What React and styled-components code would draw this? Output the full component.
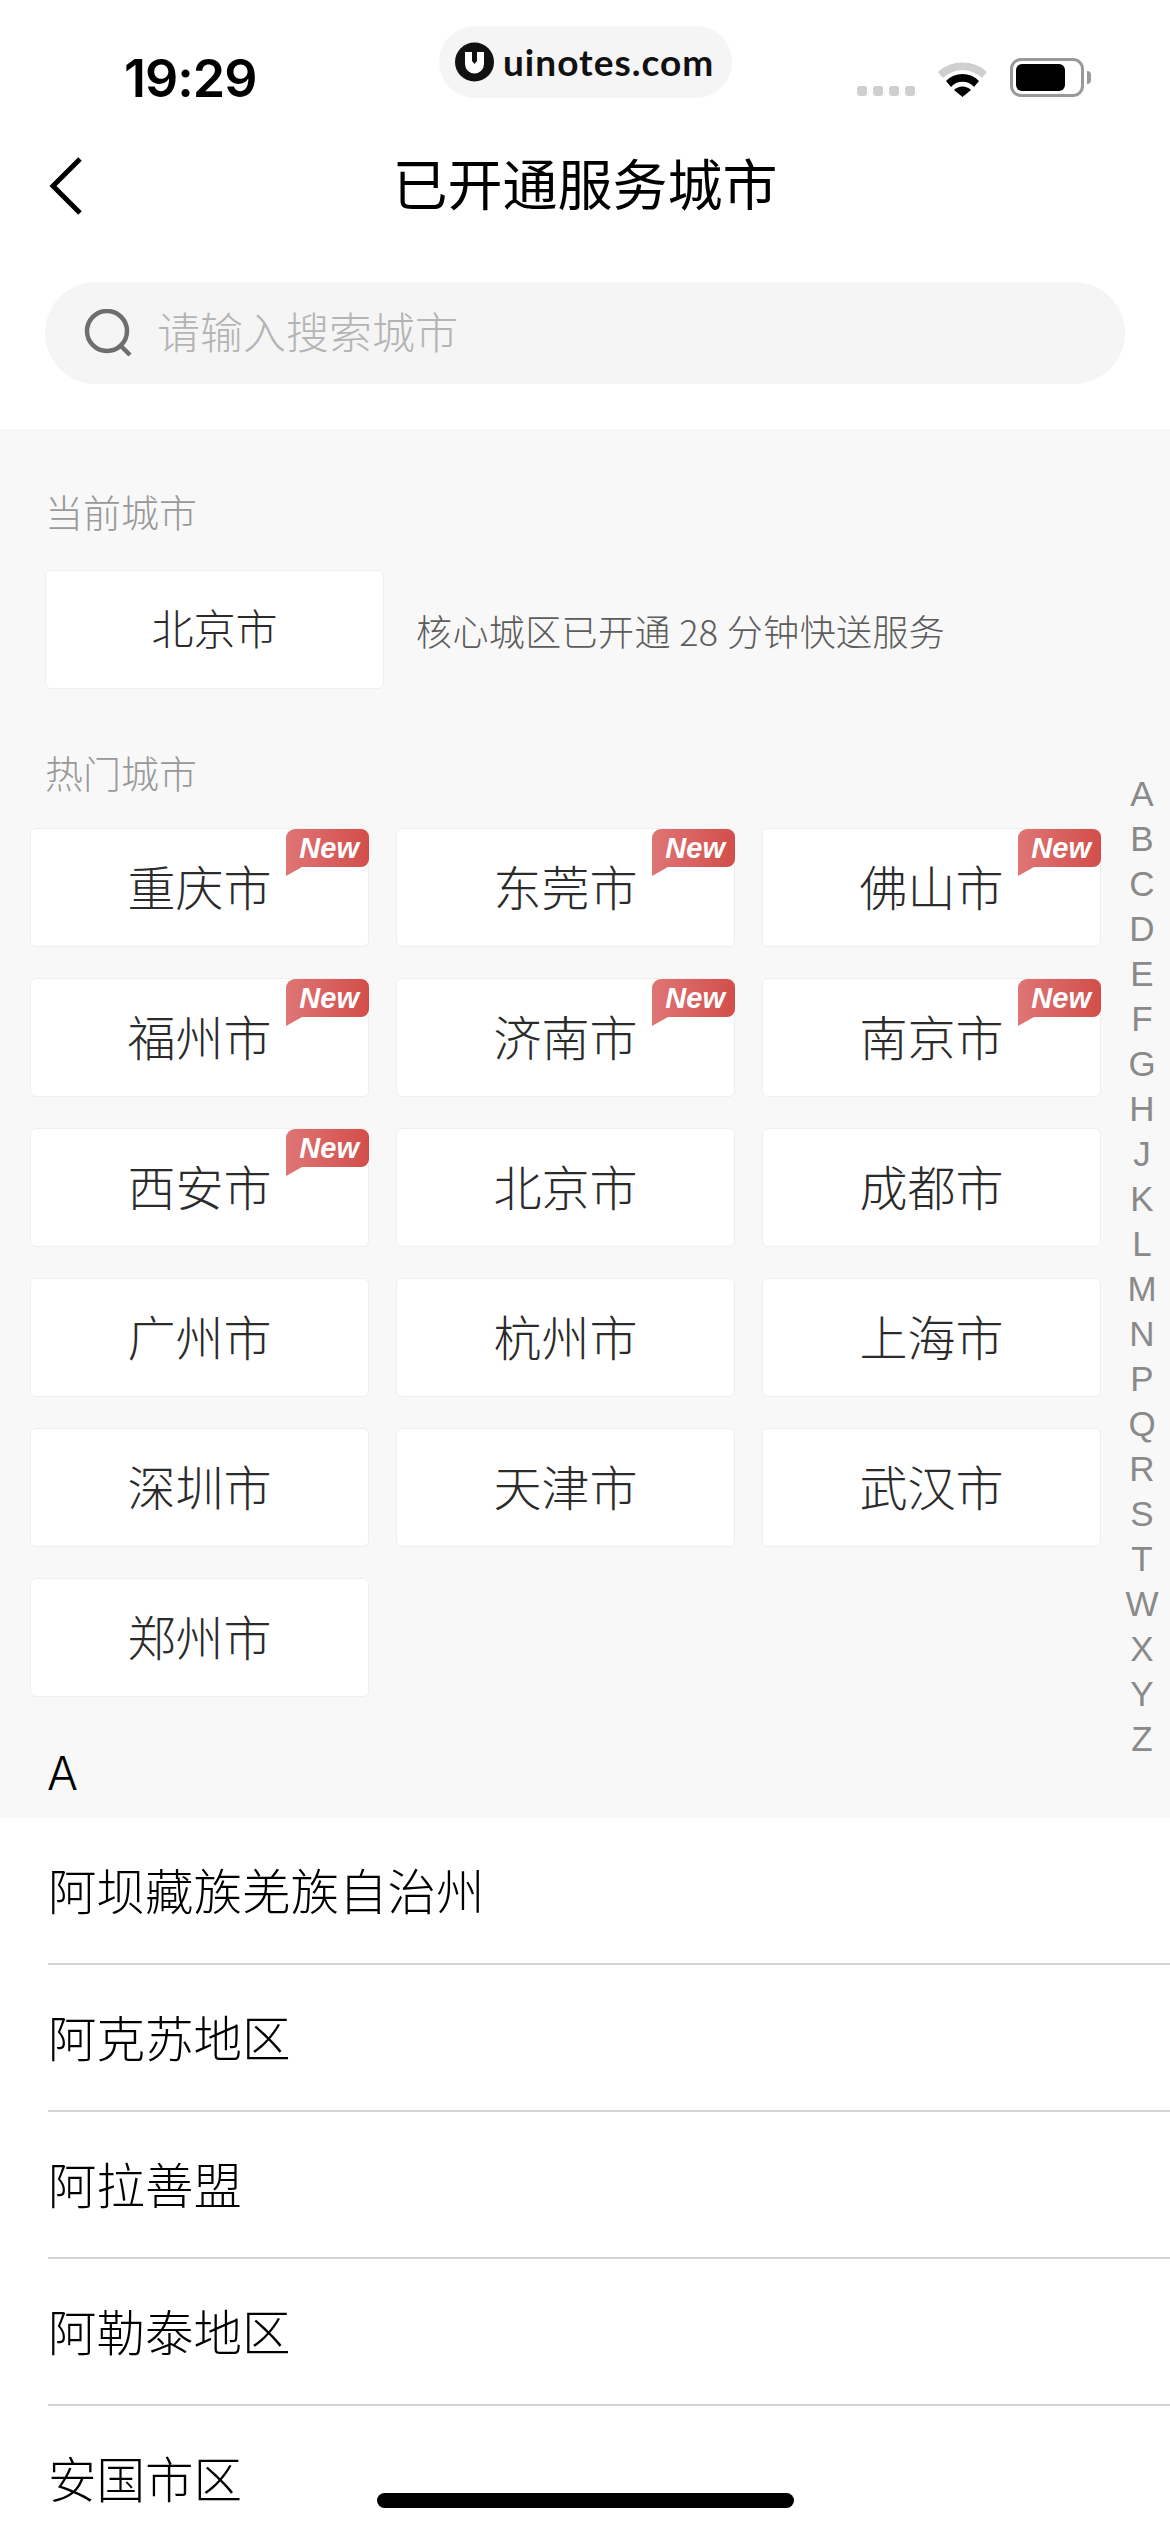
import React from "react";
import styled, { createGlobalStyle } from "styled-components";

const CJK = `"Noto Sans CJK SC", "Noto Sans", sans-serif`;

const GlobalStyle = createGlobalStyle`
    html, body {
        margin: 0;
        padding: 0;
        background: #fff;
        font-family: ${CJK};
    }
`;

const Page = styled.div`
    position: relative;
    width: 1170px;
    height: 2532px;
    overflow: hidden;
    background: #fff;
`;

// Status bar
const StatusBar = styled.div`
    height: 130px;
    box-sizing: border-box;
    padding: 51px 86px 0 124px;
    display: flex;
    justify-content: space-between;
    align-items: flex-start;
`;

const Time = styled.div`
    font-family: "Inter", "Liberation Sans", sans-serif;
    font-weight: 600;
    font-size: 52px;
    line-height: 56px;
    letter-spacing: -1px;
    color: #000;
`;

const StatusIcons = styled.div`
    display: flex;
    align-items: flex-end;
    margin-top: 7px;
`;

const Dots = styled.div`
    display: flex;
    gap: 6px;
    margin-bottom: 1px;
    margin-right: 22px;
`;

const Dot = styled.span`
    width: 10px;
    height: 10px;
    border-radius: 3px;
    background: #cfcfcf;
`;

const Battery = styled.div`
    position: relative;
    width: 74px;
    height: 39px;
    margin-left: 22px;
    box-sizing: border-box;
    border: 3px solid #999;
    border-radius: 11px;
    padding: 3px;

    &::before {
        content: "";
        display: block;
        width: 49px;
        height: 27px;
        border-radius: 6px;
        background: #000;
    }

    &::after {
        content: "";
        position: absolute;
        right: -10px;
        top: 10px;
        width: 4px;
        height: 13px;
        border-radius: 0 4px 4px 0;
        background: #999;
    }
`;

// Site watermark floating over the status bar
const Pill = styled.div`
    position: absolute;
    left: 439px;
    top: 26px;
    width: 293px;
    height: 72px;
    box-sizing: border-box;
    border-radius: 36px;
    background: #f5f5f5;
    display: flex;
    align-items: center;
    padding-left: 16px;
    gap: 9px;
`;

const PillText = styled.span`
    font-family: "Lato", "Inter", sans-serif;
    font-weight: 700;
    font-size: 37px;
    line-height: 72px;
    color: #111;
    letter-spacing: 1px;
`;

// Nav
const NavBar = styled.div`
    position: relative;
    height: 112px;
    display: flex;
    align-items: flex-start;
    justify-content: center;
`;

const BackIcon = styled.svg`
    position: absolute;
    left: 48px;
    top: 27px;
`;

const Title = styled.h1`
    margin: 0;
    font-weight: 400;
    font-size: 55px;
    line-height: 102px;
    color: #000;
`;

const SearchWrap = styled.div`
    padding: 40px 45px 45px;
`;

const SearchBar = styled.div`
    height: 102px;
    border-radius: 51px;
    background: #f5f5f5;
    display: flex;
    align-items: center;
    padding-left: 38px;
    gap: 24px;
`;

const Placeholder = styled.span`
    font-size: 43px;
    font-weight: 300;
    line-height: 96px;
    margin-bottom: 6px;
    color: #b4b4b4;
`;

// Gray block
const GraySection = styled.div`
    background: #f8f8f8;
    height: 1389px;
    box-sizing: border-box;
    padding-top: 55px;
`;

const SectionLabel = styled.div`
    padding-left: 45px;
    font-size: 38px;
    font-weight: 300;
    line-height: 54px;
    color: #999;
`;

const CurrentRow = styled.div`
    display: flex;
    align-items: center;
    gap: 32px;
    margin: 32px 0 56px 45px;
`;

const CityCard = styled.div`
    position: relative;
    box-sizing: border-box;
    width: 339px;
    height: 119px;
    padding-bottom: 6px;
    border: 1px solid #efefef;
    border-radius: 6px;
    background: #fff;
    display: flex;
    align-items: center;
    justify-content: center;
    font-size: ${p => (p.$small ? 42 : 48)}px;
    font-weight: 300;
    color: #2b2b2b;
`;

const Note = styled.span`
    font-size: 36px;
    font-weight: 300;
    line-height: 50px;
    letter-spacing: 0.4px;
    color: #5c5c5c;
`;

const HotGrid = styled.div`
    display: grid;
    grid-template-columns: repeat(3, 339px);
    column-gap: 27px;
    row-gap: 31px;
    margin: 29px 0 0 30px;
`;

const Badge = styled.svg`
    position: absolute;
    top: 0;
    right: -1px;
`;

const BadgeText = styled.span`
    position: absolute;
    top: 0;
    right: 9px;
    font-family: "Liberation Sans", sans-serif;
    font-style: italic;
    font-weight: 700;
    font-size: 29px;
    line-height: 38px;
    color: #fff;
`;

const LetterHead = styled.div`
    margin: 49px 0 0 47px;
    font-family: "Inter", "Liberation Sans", sans-serif;
    font-size: 46px;
    font-weight: 300;
    line-height: 54px;
    color: #000;
`;

const IndexBar = styled.div`
    position: absolute;
    right: 0;
    top: 771px;
    width: 56px;
    display: flex;
    flex-direction: column;
    align-items: center;
`;

const IndexLetter = styled.span`
    font-family: "Liberation Sans", sans-serif;
    font-size: 35px;
    line-height: 45px;
    color: #8a8a8a;
`;

// List
const CityRow = styled.div`
    margin-left: 48px;
    height: 147px;
    box-sizing: border-box;
    padding-bottom: 4px;
    border-bottom: 2px solid #d4d4d4;
    display: flex;
    align-items: center;
    font-size: 48.5px;
    font-weight: 300;
    color: #000;
`;

const HomeIndicator = styled.div`
    position: absolute;
    left: 377px;
    top: 2493px;
    width: 417px;
    height: 15px;
    border-radius: 8px;
    background: #000;
`;

const hotCities = [
    ["重庆市", true], ["东莞市", true], ["佛山市", true],
    ["福州市", true], ["济南市", true], ["南京市", true],
    ["西安市", true], ["北京市"], ["成都市"],
    ["广州市"], ["杭州市"], ["上海市"],
    ["深圳市"], ["天津市"], ["武汉市"],
    ["郑州市"],
];

const indexLetters = "ABCDEFGHJKLMNPQRSTWXYZ".split("");

const listCities = ["阿坝藏族羌族自治州", "阿克苏地区", "阿拉善盟", "阿勒泰地区", "安国市区"];

const NewBadge = ({ id }) => (
    <>
        <Badge width="84" height="48" viewBox="0 0 84 48">
            <defs>
                <linearGradient id={id} x1="0" x2="1" y1="0" y2="0">
                    <stop offset="0" stopColor="#df7575" />
                    <stop offset="1" stopColor="#d24e4a" />
                </linearGradient>
            </defs>
            <path d="M10 0H76a8 8 0 0 1 8 8V30a8 8 0 0 1-8 8H17L1 47V9a9 9 0 0 1 9-9Z" fill={`url(#${id})`} />
        </Badge>
        <BadgeText>New</BadgeText>
    </>
);

const App = () => {
    return (
        <Page>
            <GlobalStyle />
            <StatusBar>
                <Time>19:29</Time>
                <StatusIcons>
                    <Dots>
                        <Dot /><Dot /><Dot /><Dot />
                    </Dots>
                    <svg width="51" height="37" viewBox="0 0 51 37">
                        <path d="M1 12A36 36 0 0 1 50 12L45 18A28 28 0 0 0 6 18Z" fill="#cfcfcf" />
                        <path d="M9 21A23 23 0 0 1 42 21L37 27A15 15 0 0 0 14 27Z" fill="#000" />
                        <path d="M17 30A12 12 0 0 1 34 30L25.5 37Z" fill="#000" />
                    </svg>
                    <Battery />
                </StatusIcons>
            </StatusBar>
            <Pill>
                <svg width="39" height="40" viewBox="0 0 39 40">
                    <circle cx="19.5" cy="20" r="19.5" fill="#111" />
                    <path d="M10 10h7v9l2.5 3 2.5-3v-9h7v12a9.5 9.5 0 0 1-19 0Z" fill="#fff" />
                </svg>
                <PillText>uinotes.com</PillText>
            </Pill>

            <NavBar>
                <BackIcon width="36" height="58" viewBox="0 0 36 58" fill="none">
                    <path d="M32 2L5 29L32 56" stroke="#000" strokeWidth="5" />
                </BackIcon>
                <Title>已开通服务城市</Title>
            </NavBar>

            <SearchWrap>
                <SearchBar>
                    <svg width="50" height="48" viewBox="0 0 50 48" fill="none">
                        <circle cx="24" cy="22" r="20" stroke="#6e6e6e" strokeWidth="4.5" />
                        <path d="M38 37L47 46" stroke="#6e6e6e" strokeWidth="4.5" />
                    </svg>
                    <Placeholder>请输入搜索城市</Placeholder>
                </SearchBar>
            </SearchWrap>

            <GraySection>
                <SectionLabel>当前城市</SectionLabel>
                <CurrentRow>
                    <CityCard $small>北京市</CityCard>
                    <Note>核心城区已开通 28 分钟快送服务</Note>
                </CurrentRow>
                <SectionLabel>热门城市</SectionLabel>
                <HotGrid>
                    {hotCities.map(([name, isNew], i) => (
                        <CityCard key={name}>
                            {name}
                            {isNew ? <NewBadge id={`badge-${i}`} /> : null}
                        </CityCard>
                    ))}
                </HotGrid>
                <LetterHead>A</LetterHead>
            </GraySection>

            <IndexBar>
                {indexLetters.map(letter => (
                    <IndexLetter key={letter}>{letter}</IndexLetter>
                ))}
            </IndexBar>

            {listCities.map(name => (
                <CityRow key={name}>{name}</CityRow>
            ))}

            <HomeIndicator />
        </Page>
    );
};

export default App;
